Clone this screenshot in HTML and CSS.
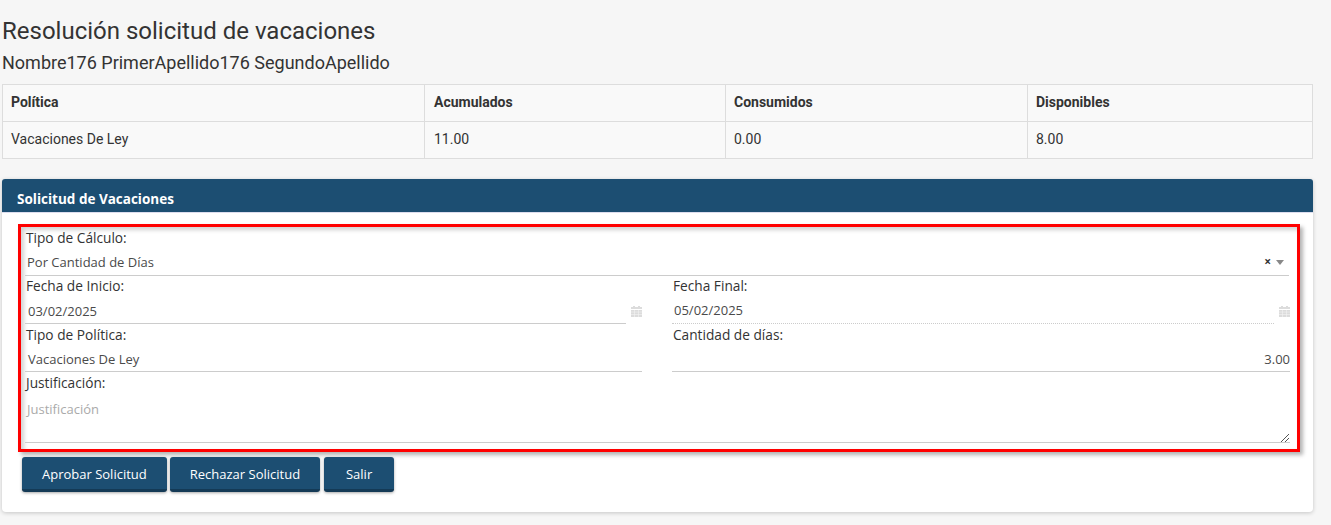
FILE: index.html
```html
<!DOCTYPE html>
<html lang="es">
<head>
<meta charset="utf-8">
<title>Resolución solicitud de vacaciones</title>
<link rel="stylesheet" href="styles.css">
</head>
<body>
<main class="page">
  <h1 class="title">Resolución solicitud de vacaciones</h1>
  <h2 class="subtitle">Nombre176 PrimerApellido176 SegundoApellido</h2>
  <table class="summary">
    <thead>
      <tr><th class="c1">Política</th><th class="c2">Acumulados</th><th class="c3">Consumidos</th><th class="c4">Disponibles</th></tr>
    </thead>
    <tbody>
      <tr><td>Vacaciones De Ley</td><td class="c2">11.00</td><td>0.00</td><td>8.00</td></tr>
    </tbody>
  </table>
  <section class="panel">
    <header class="panel-head">Solicitud de Vacaciones</header>
    <div class="panel-body">
      <div class="highlight">
        <div class="field">
          <div class="label">Tipo de Cálculo:</div>
          <div class="control select">
            <span class="value grow">Por Cantidad de Días</span>
            <span class="clear">×</span>
            <span class="caret"></span>
          </div>
        </div>
        <div class="row">
          <div class="field">
            <div class="label">Fecha de Inicio:</div>
            <div class="date">
              <div class="control"><span class="value">03/02/2025</span></div>
              <svg class="cal" viewBox="0 0 11 11" aria-hidden="true"><path d="M2 0h2v1h3V0h2v1h2v2H0V1h2zM0 4h11v7H0z" fill="#dcdcdc"/><path d="M0 6h11M0 8.500h11M3.500 4v7M7.500 4v7" stroke="#f4f4f4" stroke-width=".6"/></svg>
            </div>
          </div>
          <div class="field">
            <div class="label">Fecha Final:</div>
            <div class="date">
              <div class="control dotted"><span class="value">05/02/2025</span></div>
              <svg class="cal" viewBox="0 0 11 11" aria-hidden="true"><path d="M2 0h2v1h3V0h2v1h2v2H0V1h2zM0 4h11v7H0z" fill="#dcdcdc"/><path d="M0 6h11M0 8.500h11M3.500 4v7M7.500 4v7" stroke="#f4f4f4" stroke-width=".6"/></svg>
            </div>
          </div>
        </div>
        <div class="row shifted">
          <div class="field">
            <div class="label">Tipo de Política:</div>
            <div class="control short"><span class="value">Vacaciones De Ley</span></div>
          </div>
          <div class="field">
            <div class="label">Cantidad de días:</div>
            <div class="control short right"><span class="value">3.00</span></div>
          </div>
        </div>
        <div class="field shifted">
          <div class="label">Justificación:</div>
          <div class="area">
            <span class="placeholder">Justificación</span>
            <svg class="grip" viewBox="0 0 8 8" aria-hidden="true"><path d="M0 8 8 0M4 8l4-4" stroke="#555" stroke-width="1"/></svg>
          </div>
        </div>
      </div>
      <div class="actions">
        <button class="btn">Aprobar Solicitud</button>
        <button class="btn">Rechazar Solicitud</button>
        <button class="btn btn-last">Salir</button>
      </div>
    </div>
  </section>
</main>
</body>
</html>
```
FILE: styles.css
```css
* { box-sizing: border-box; }
html, body { margin: 0; padding: 0; }
body {
  background: #f6f6f6;
  color: #333;
  font-family: Roboto, "Liberation Sans", sans-serif;
  height: 525px;
  overflow: hidden;
}
.page { padding: 17px 18px 0 2px; }
.title {
  margin: 0;
  font-size: 24px;
  font-weight: 400;
  line-height: 28px;
}
.subtitle {
  margin: 6px 0 0;
  font-size: 18px;
  font-weight: 400;
  line-height: 24px;
}
.summary {
  width: 1311px;
  margin-top: 9px;
  border-collapse: collapse;
  table-layout: fixed;
  font-size: 14px;
  background: #f9f9f9;
}
.summary th, .summary td {
  height: 37px;
  padding: 0 8px 2px;
  border: 1px solid #ddd;
  text-align: left;
  line-height: 20px;
}
.summary th { font-weight: 700; }
.c1 { width: 422px; }
.c2 { width: 301px; }
.c3 { width: 302px; }
.summary .c2 { padding-left: 9px; }
.panel {
  margin-top: 20px;
  width: 1311px;
  height: 333px;
  background: #fff;
  border-radius: 4px;
  box-shadow: 0 1px 4px rgba(0, 0, 0, .2);
}
.panel-head {
  height: 34px;
  padding: 11px 15px 0;
  background: #1c4e72;
  border-bottom: 1px solid #dde;
  border-radius: 3px 3px 0 0;
  color: #fff;
  font-family: "Open Sans", sans-serif;
  font-size: 13.500px;
  font-weight: 700;
  line-height: 18px;
}
.panel-body { padding: 11px 13px 0 16px; }
.highlight {
  display: flex;
  flex-direction: column;
  height: 228px;
  padding: 1px 8px 0 4px;
  border: 3px solid #f00;
  box-shadow: 3px 3px 4px rgba(0, 0, 0, .3), inset 3px 3px 4px rgba(0, 0, 0, .18);
  font-family: "Open Sans", sans-serif;
}
.row {
  display: grid;
  grid-template-columns: 617px 618px;
  column-gap: 30px;
  width: 1265px;
}
.shifted { padding-top: 1px; }
.label {
  height: 24px;
  font-size: 13.700px;
  padding-left: 1px;
  line-height: 20px;
  color: #333;
}
.control {
  display: flex;
  align-items: center;
  height: 24px;
  padding: 0 2px 3px;
  border-bottom: 1px solid #ccc;
  font-size: 13px;
  color: #4a4a4a;
}
.short { height: 23px; padding: 0 3px 2px; }
.select { padding-right: 5px; }
.grow { flex: 1; }
.clear {
  margin-right: 5px;
  color: #333;
  font-size: 12px;
  font-weight: 700;
  line-height: 12px;
}
.caret {
  width: 0;
  height: 0;
  border-left: 4px solid transparent;
  border-right: 4px solid transparent;
  border-top: 5px solid #888;
}
.date {
  display: flex;
  align-items: center;
  column-gap: 5px;
}
.date .control { flex: 1; padding: 0 3px 2px; }
.date .dotted { border-bottom: 1px dotted #ccc; padding: 0 2px 4px; }
.cal { flex: none; width: 11px; height: 11px; margin-bottom: 2px; }
.right { justify-content: flex-end; padding-right: 0; }
.area {
  position: relative;
  height: 46px;
  padding: 2px 2px 0;
  border-bottom: 1px solid #ccc;
  font-size: 13px;
  line-height: 20px;
  width: 1265px;
}
.placeholder { color: #aaa; }
.grip {
  position: absolute;
  right: 1px;
  bottom: 0;
  width: 8px;
  height: 8px;
}
.actions {
  display: flex;
  column-gap: 3px;
  margin: 5px 0 0 4px;
}
.btn {
  height: 35px;
  min-width: 70px;
  padding: 2px 20px 0;
  border: 0;
  border-bottom: 3px solid #143a56;
  border-radius: 3px;
  background: #1c4e72;
  box-shadow: 0 1px 3px rgba(0, 0, 0, .35);
  color: #fff;
  font-family: "Open Sans", sans-serif;
  font-size: 13px;
  line-height: 18px;
}
.btn-last { margin-left: 1px; }
```
